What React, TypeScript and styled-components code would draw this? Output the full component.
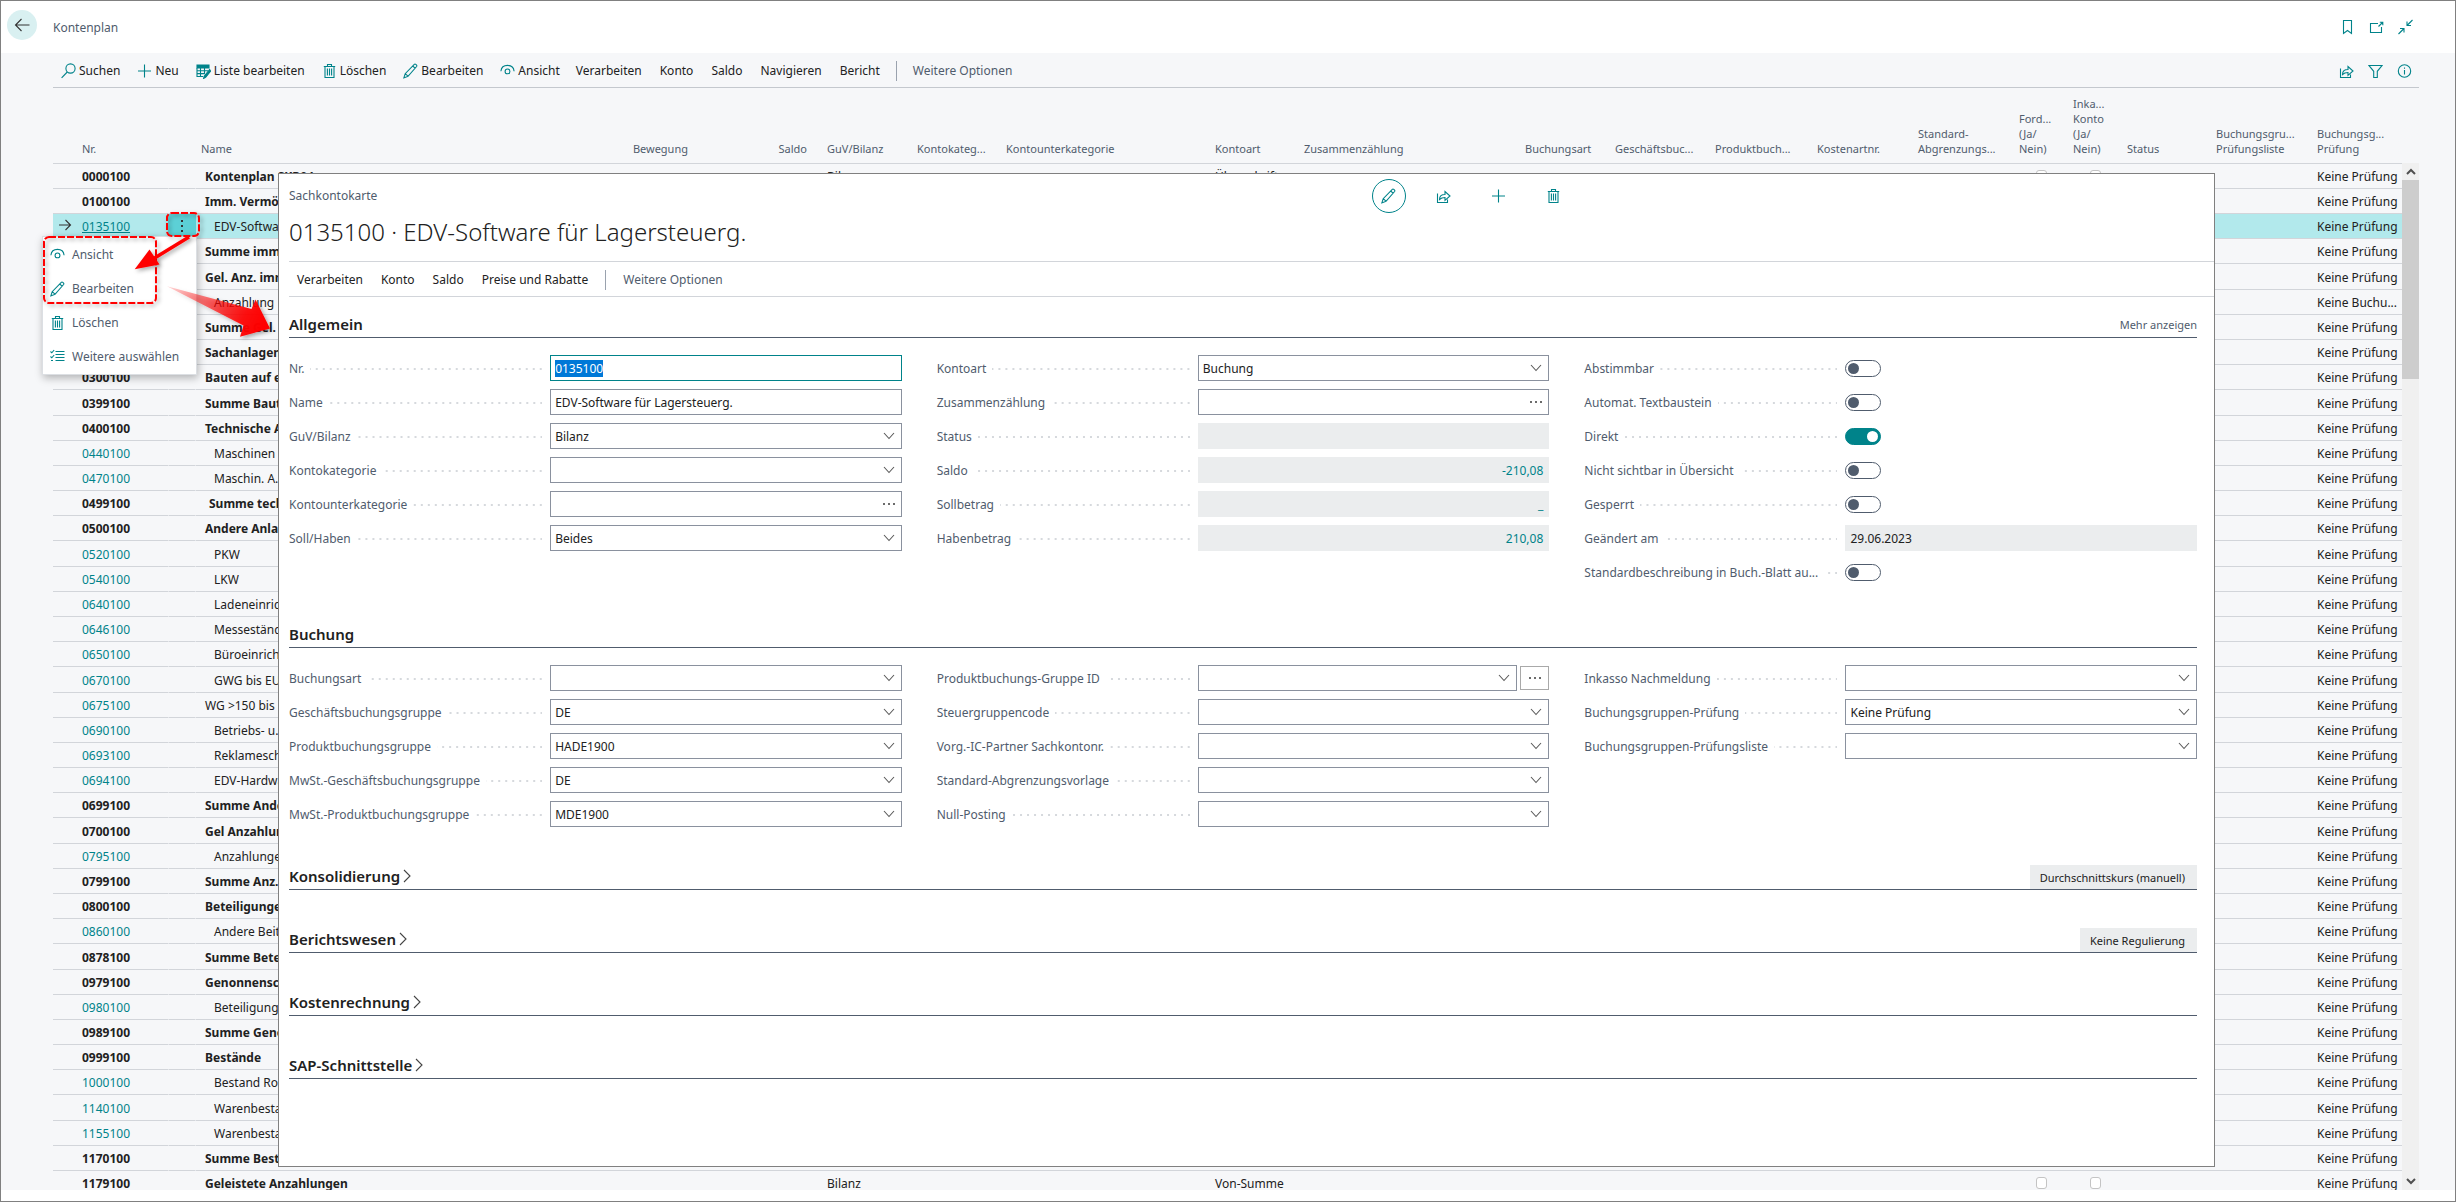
import React, { useEffect, useId, useRef } from 'react';
import styled, { createGlobalStyle, css } from 'styled-components';

/* ---------- theme values ---------- */

const teal = '#00838a';
const ink = '#212121';
const slate = '#505c6d';
const line = '#d2d5da';
const fieldGrey = '#ebedee';
const font = "'Noto Sans', 'Open Sans', sans-serif";

const GlobalStyle = createGlobalStyle`
  *, *::before, *::after { box-sizing: border-box; }
  body { margin: 0; background: #fff; }
  button, input, select { font: inherit; color: inherit; }
  ::selection { background: #0078d7; color: #fff; }
`;

/* ---------- page frame ---------- */

const Frame = styled.div`
  position: relative;
  display: flex;
  flex-direction: column;
  height: 100vh;
  padding-bottom: 11px;
  overflow: hidden;
  border: 1px solid #808080;
  background: #fff;
  color: ${ink};
  font: 12px/18px ${font};
`;

const TopBar = styled.header`
  display: flex;
  align-items: center;
  flex: none;
  height: 52px;
  padding: 0 42px 0 6px;
`;

const BackButton = styled.button`
  display: grid;
  place-items: center;
  width: 30px;
  height: 30px;
  margin: 0 16px 4px 0;
  padding: 0;
  border: 0;
  border-radius: 50%;
  background: #d9f0f1;
`;

const PageName = styled.h1`
  flex: 1;
  margin: 0;
  padding-top: 2px;
  color: ${slate};
  font-size: 12px;
  font-weight: 400;
`;

const IconButton = styled.button`
  display: grid;
  place-items: center;
  width: 15px;
  height: 20px;
  padding: 0;
  border: 0;
  background: none;
`;

const IconSet = styled.div`
  display: flex;
  gap: 14px;
`;

const Body = styled.main`
  display: flex;
  flex-direction: column;
  flex: 1;
  min-height: 0;
  padding: 0 36px 0 52px;
  background: #f6f7f9;
`;

const Toolbar = styled.nav`
  display: flex;
  align-items: center;
  gap: 16px;
  flex: none;
  height: 35px;
  padding: 1px 7px 0 8px;
  border-bottom: 1px solid #c4c8ce;
`;

const ActionGroup = styled.div<{ $gap: number }>`
  display: flex;
  align-items: center;
  gap: ${(p) => p.$gap}px;
`;

const Action = styled.button<{ $muted?: boolean }>`
  display: flex;
  align-items: center;
  gap: 3px;
  padding: 0;
  border: 0;
  background: none;
  color: ${(p) => (p.$muted ? slate : ink)};
  white-space: nowrap;

  svg { flex: none; }
`;

const Divider = styled.span`
  width: 1px;
  height: 20px;
  background: #9aa2ae;
`;

const Push = styled.div`
  flex: 1;
`;

/* ---------- list ---------- */

const ListArea = styled.div`
  display: flex;
  flex: 1;
  min-height: 0;
  overflow: hidden;
`;

const Table = styled.table`
  flex: 1;
  width: 100%;
  height: 0;
  min-width: 0;
  table-layout: fixed;
  border-collapse: separate;
  border-spacing: 0;
`;

const HeadCell = styled.th<{ $end?: boolean; $near?: boolean }>`
  height: 76px;
  padding: 0 ${(p) => (p.$near ? 5 : 10)}px 7px;
  border-bottom: 1px solid ${line};
  color: ${slate};
  font-size: 11px;
  line-height: 15px;
  font-weight: 400;
  text-align: ${(p) => (p.$end ? 'right' : 'left')};
  vertical-align: bottom;
  white-space: nowrap;
`;

const Row = styled.tr<{ $current?: boolean }>`
  height: 25px;
  background: ${(p) => (p.$current ? '#b2e9ec' : 'transparent')};

  /* zoomed row pitch is slightly above 25px: spread the spare pixels */
  &:nth-child(11n + 5),
  &:nth-child(11n + 10) { height: 26px; }
`;

const Cell = styled.td<{ $near?: boolean; $indent?: number; $bold?: boolean; $clip?: boolean }>`
  padding: 2px 0 0 ${(p) => (p.$near ? 5 : 10) + (p.$indent ?? 0)}px;
  overflow: ${(p) => (p.$clip ? 'hidden' : 'visible')};
  border-bottom: 1px solid ${line};
  font-weight: ${(p) => (p.$bold ? 700 : 400)};
  white-space: nowrap;
`;

const AccountLink = styled.a<{ $current?: boolean }>`
  color: ${teal};
  text-decoration: ${(p) => (p.$current ? 'underline' : 'none')};
`;

const RowMenuCell = styled.td<{ $current?: boolean }>`
  padding: 0;
  border-right: 1px solid #f6f7f9;
  border-bottom: 1px solid ${line};
  border-left: 1px solid #f6f7f9;
  ${(p) => p.$current && css`
    border-color: #5cd0d6;
    background: #5cd0d6;
  `}
`;

const MoreButton = styled.button`
  display: grid;
  place-items: center;
  width: 100%;
  height: 20px;
  padding: 0;
  border: 0;
  background: none;
`;

const CheckCell = styled.td`
  padding: 0 0 0 27px;
  border-bottom: 1px solid ${line};
  line-height: 0;
`;

const CheckBox = styled.input`
  appearance: none;
  width: 11px;
  height: 12px;
  margin: 0;
  border: 1px solid #c4c4c4;
  border-radius: 3px;
  background: #fff;
`;

const ScrollBar = styled.div`
  display: flex;
  flex-direction: column;
  flex: none;
  width: 17px;
  margin-top: 75px;
  background: #f0f0f0;
`;

const ScrollArrow = styled.span`
  display: grid;
  place-items: center;
  height: 17px;
`;

const Thumb = styled.span`
  height: 199px;
  background: #cdcdcd;
`;

/* ---------- row menu ---------- */

const Menu = styled.div`
  position: absolute;
  top: 235px;
  left: 41px;
  display: flex;
  flex-direction: column;
  min-width: 155px;
  padding: 1px 13px 0 7px;
  border: 1px solid #dcdfe3;
  background: #fff;
  box-shadow: 1px 3px 8px rgba(0, 0, 0, 0.28);
`;

const MenuItem = styled.button`
  display: flex;
  align-items: center;
  gap: 7px;
  height: 34px;
  padding: 0;
  border: 0;
  background: none;
  color: ${slate};
  white-space: nowrap;
`;

const Annotation = styled.svg`
  position: absolute;
  top: 199px;
  left: 29px;
  pointer-events: none;
`;

/* ---------- card ---------- */

const Card = styled.section`
  position: absolute;
  top: 172px;
  right: 240px;
  bottom: 34px;
  left: 277px;
  overflow: hidden;
  padding-left: 10px;
  border: 1px solid #808080;
  background: #fff;
`;

const CardTop = styled.div`
  padding: 5px 0 10px;
  border-bottom: 1px solid ${line};
`;

const CardBar = styled.div`
  display: grid;
  grid-template-columns: 9fr 7fr;
  align-items: center;
  height: 34px;
  color: ${slate};
`;

const CardIcons = styled.div`
  display: flex;
  align-items: center;
  gap: 21px;
`;

const RoundButton = styled.button<{ $ring?: boolean }>`
  display: grid;
  place-items: center;
  width: 34px;
  height: 34px;
  padding: 0;
  border: ${(p) => (p.$ring ? `1px solid ${teal}` : '0')};
  border-radius: 50%;
  background: none;
`;

const CardTitle = styled.h2`
  margin: 0;
  font-size: 24px;
  line-height: 38px;
  font-weight: 300;
`;

const CardActions = styled.nav`
  display: flex;
  align-items: center;
  gap: 17px;
  height: 35px;
  padding: 2px 0 0 8px;
  border-bottom: 1px solid ${line};
`;

const CardBody = styled.div`
  padding: 13px 17px 0 0;
`;

const SectionHead = styled.div`
  display: flex;
  align-items: center;
  height: 28px;
  border-bottom: 1px solid ${slate};

  & + & { margin-top: 35px; }
`;

const Fields = styled.div`
  display: grid;
  grid-template-columns: repeat(3, 1fr);
  gap: 35px;
  padding: 17px 0 0;

  & + div { margin-top: 35px; }
`;

const FieldColumn = styled.div`
  display: flex;
  flex-direction: column;
  gap: 8px;
`;

const SectionTitle = styled.h3`
  flex: 1;
  margin: 0;
  padding-top: 1px;
  font-size: 15px;
  line-height: 20px;
  font-weight: 600;
`;

const Expander = styled.button`
  display: flex;
  align-items: center;
  gap: 3px;
  padding: 0;
  border: 0;
  background: none;
`;

const ShowMore = styled.button`
  padding: 3px 0 0;
  border: 0;
  background: none;
  color: ${slate};
  font-size: 11px;
`;

const Summary = styled.span`
  align-self: stretch;
  margin-top: 3px;
  padding: 4px 12px 0 10px;
  background: ${fieldGrey};
  font-size: 11px;
`;

const FieldRow = styled.div`
  display: grid;
  grid-template-columns: 26fr 35fr;
  align-items: center;
  height: 26px;
`;

const LabelLine = styled.div`
  display: flex;
  align-items: center;
  gap: 6px;
  padding: 1px 8px 0 0;
  color: ${slate};
  white-space: nowrap;

  &::after {
    content: '';
    flex: 1;
    height: 2px;
    background: linear-gradient(to right, transparent 5px, #d6d9dd 5px) right / 7px 2px repeat-x;
  }
`;

const Box = styled.div<{ $focus?: boolean }>`
  position: relative;
  display: flex;
  flex: 1;
  align-items: center;
  height: 26px;
  border: 1px solid ${(p) => (p.$focus ? teal : '#8a919e')};
  background: #fff;

  input, select {
    appearance: none;
    flex: 1;
    width: 100%;
    min-width: 0;
    height: 24px;
    padding: 1px 24px 0 4px;
    border: 0;
    border-radius: 0;
    outline: 0;
    background: none;
  }
`;

const BoxGlyph = styled.span`
  position: absolute;
  right: 6px;
  display: flex;
  pointer-events: none;
`;

const ReadOnly = styled.output<{ $figure?: boolean }>`
  height: 26px;
  padding: 5px 6px 0 5px;
  background: ${fieldGrey};
  color: ${(p) => (p.$figure ? teal : ink)};
  text-align: ${(p) => (p.$figure ? 'right' : 'left')};
`;

const Assist = styled.div`
  display: flex;
  align-items: center;
  gap: 3px;
`;

const AssistButton = styled.button`
  display: grid;
  place-items: center;
  width: 29px;
  height: 24px;
  padding: 0;
  border: 1px solid #a9a9a9;
  background: #fff;
`;

const Switch = styled.input`
  appearance: none;
  display: flex;
  align-items: center;
  width: 36px;
  height: 17px;
  margin: 0;
  padding: 0 2px;
  border: 1px solid ${slate};
  border-radius: 9px;
  background: #fff;

  &::before {
    content: '';
    width: 11px;
    height: 11px;
    border-radius: 50%;
    background: ${slate};
  }

  &:checked {
    justify-content: flex-end;
    border-color: ${teal};
    background: ${teal};
  }
  &:checked::before { background: #fff; }
`;

/* ---------- icons ---------- */

type IconProps = { w: number; h: number; children: React.ReactNode; color?: string };

const Icon = ({ w, h, children, color = teal }: IconProps) => (
  <svg width={w} height={h} viewBox={`0 0 ${w} ${h}`} fill="none" stroke={color} strokeWidth="1.1" aria-hidden="true">
    {children}
  </svg>
);

const BackIcon = () => (
  <Icon w={16} h={14} color="#333"><path d="M15.500 7H1.500M7.500 1L1.500 7l6 6" /></Icon>
);
const SearchIcon = () => (
  <Icon w={15} h={16}><circle cx="9.500" cy="5.500" r="4.600" /><path d="M6.300 9L.6 14.900" /></Icon>
);
const PlusIcon = () => (
  <Icon w={15} h={16}><path d="M7.500 1.500v13M1 8h13" /></Icon>
);
const EditListIcon = () => (
  <Icon w={15} h={16}>
    <path d="M1 2h12v3H1z" fill={teal} />
    <path d="M1 5v8.500h6M1 7.800h11M1 10.600h8M4.500 5v8.500M8.500 5v6" />
    <path d="M13.600 6.500L8.200 13.200l-.6 2.200 2-1 5-6.200z" fill={teal} />
  </Icon>
);
const TrashIcon = () => (
  <Icon w={15} h={16}>
    <path d="M1.800 3.500h11.400M5.500 3.500v-2h4v2M3 3.500v11h9v-11M5.400 5.500v7M7.500 5.500v7M9.600 5.500v7" />
  </Icon>
);
const PencilIcon = () => (
  <Icon w={15} h={16}>
    <path d="M11.300 1.300c.9-.9 3.200 1 2.300 2.200L5 13.300.9 14.900l1.300-4.200zM9.700 3l2.400 2.200M2.200 10.700l2.800 2.500" />
  </Icon>
);
const EyeIcon = () => (
  <Icon w={15} h={16}>
    <path d="M.9 8.200C1.300 4.600 4 2.400 7.500 2.400s6.200 2.200 6.600 5.800" /><circle cx="7.500" cy="8.400" r="2.400" />
  </Icon>
);
const SelectMoreIcon = () => (
  <Icon w={15} h={16}>
    <path d="M5.500 2.500h9M5.500 5.500h9M5.500 8.500h9M5.500 11.500h9M.5 2.500l1.300 1.300L4.200 1M.5 7.500l1.300 1.300L4.200 6M1 11.500h2" />
  </Icon>
);
const BookmarkIcon = () => (
  <Icon w={15} h={16}><path d="M3.500 1.500h8v13l-4-3-4 3z" /></Icon>
);
const PopOutIcon = () => (
  <Icon w={15} h={16}><path d="M9 4.500H1.500v9h11V8M9.500 7.500l4-4M10.800 3.300h3v3" /></Icon>
);
const CollapseIcon = () => (
  <Icon w={15} h={16}><path d="M14.500 1L9 6.500M9 2.500v4h4M.5 15L6 9.500M2 9.500h4v4" /></Icon>
);
const ShareIcon = () => (
  <Icon w={15} h={16}>
    <path d="M1.500 5.500v9h10v-3M3.500 11.500c0-3.500 2-5 5.500-5v-3l5 4.500-5 4.300V9.500C6.500 9.500 5 10 3.500 11.500z" />
  </Icon>
);
const FilterIcon = () => (
  <Icon w={15} h={16}><path d="M1 2.500h13L9.300 8.300v6.200H5.700V8.300z" /></Icon>
);
const InfoIcon = () => (
  <Icon w={15} h={16}><circle cx="7.500" cy="8" r="6.200" /><path d="M7.500 7v4.500M7.500 4.500v1.200" /></Icon>
);
const ArrowIcon = () => (
  <Icon w={14} h={12} color="#333"><path d="M1 6h11.500M7.500 1l5 5-5 5" /></Icon>
);
const DotsVertical = () => (
  <Icon w={4} h={14} color="none"><path d="M1 1h2v2H1zM1 6h2v2H1zM1 11h2v2H1z" fill="#333" /></Icon>
);
const ChevronDown = () => (
  <Icon w={12} h={8} color="#5a5a5a"><path d="M1 1l5 5.500L11 1" /></Icon>
);
const Ellipsis = () => (
  <Icon w={12} h={8} color="none"><path d="M0 3h2v2H0zM5 3h2v2H5zM10 3h2v2h-2z" fill="#6b6b6b" /></Icon>
);
const ChevronRight = () => (
  <Icon w={8} h={14} color="#444"><path d="M1 1l6 6-6 6" /></Icon>
);
const ScrollChevron = ({ up }: { up?: boolean }) => (
  <svg width="10" height="7" viewBox="0 0 10 7" fill="none" stroke="#505050" strokeWidth="2" aria-hidden="true">
    <path d={up ? 'M1 6l4-4 4 4' : 'M1 1l4 4 4-4'} />
  </svg>
);

/* ---------- data ---------- */

type Account = { no: string; name: string; indent?: number; posting?: boolean; balance?: string; type?: string; check?: string };

const heading = (no: string, name: string, extra: Partial<Account> = {}): Account => ({ no, name, indent: 4, ...extra });
const posting = (no: string, name: string, extra: Partial<Account> = {}): Account => ({ no, name, indent: 13, posting: true, ...extra });

const accounts: Account[] = [
  heading('0000100', 'Kontenplan SKR04', { balance: 'Bilanz', type: 'Überschrift' }),
  heading('0100100', 'Imm. Vermögen'),
  posting('0135100', 'EDV-Software'),
  heading('', 'Summe imm.'),
  heading('', 'Gel. Anz. imm.'),
  posting('', 'Anzahlung', { check: 'Keine Buchu...' }),
  heading('', 'Summe Gel.'),
  heading('', 'Sachanlagen'),
  heading('0300100', 'Bauten auf e.'),
  heading('0399100', 'Summe Bauten'),
  heading('0400100', 'Technische A.'),
  posting('0440100', 'Maschinen'),
  posting('0470100', 'Maschin. A.'),
  heading('0499100', 'Summe techn.', { indent: 8 }),
  heading('0500100', 'Andere Anlagen'),
  posting('0520100', 'PKW'),
  posting('0540100', 'LKW'),
  posting('0640100', 'Ladeneinricht.'),
  posting('0646100', 'Messestände'),
  posting('0650100', 'Büroeinricht.'),
  posting('0670100', 'GWG bis EUR'),
  posting('0675100', 'WG >150 bis', { indent: 4 }),
  posting('0690100', 'Betriebs- u.'),
  posting('0693100', 'Reklameschild'),
  posting('0694100', 'EDV-Hardware'),
  heading('0699100', 'Summe Andere'),
  heading('0700100', 'Gel Anzahlung'),
  posting('0795100', 'Anzahlungen'),
  heading('0799100', 'Summe Anz.'),
  heading('0800100', 'Beteiligungen'),
  posting('0860100', 'Andere Beit.'),
  heading('0878100', 'Summe Beteil.'),
  heading('0979100', 'Genonnensch.'),
  posting('0980100', 'Beteiligung'),
  heading('0989100', 'Summe Genon.'),
  heading('0999100', 'Bestände'),
  posting('1000100', 'Bestand Roh'),
  posting('1140100', 'Warenbestand'),
  posting('1155100', 'Warenbestand'),
  heading('1170100', 'Summe Best.'),
  heading('1179100', 'Geleistete Anzahlungen', { balance: 'Bilanz', type: 'Von-Summe' }),
];

type Column = { key: string; title: string[]; width?: number; end?: boolean; near?: boolean };

const columns: Column[] = [
  { key: 'mark', title: [], width: 24 },
  { key: 'no', title: ['Nr.'], width: 91, near: true },
  { key: 'menu', title: [], width: 28 },
  { key: 'name', title: ['Name'], near: true },
  { key: 'net', title: ['Bewegung'], width: 119, end: true },
  { key: 'balance', title: ['Saldo'], width: 119, end: true },
  { key: 'guv', title: ['GuV/Bilanz'], width: 90 },
  { key: 'cat', title: ['Kontokateg...'], width: 89 },
  { key: 'subcat', title: ['Kontounterkategorie'], width: 209 },
  { key: 'type', title: ['Kontoart'], width: 89 },
  { key: 'total', title: ['Zusammenzählung'], width: 221 },
  { key: 'post', title: ['Buchungsart'], width: 90 },
  { key: 'bus', title: ['Geschäftsbuc...'], width: 100 },
  { key: 'prod', title: ['Produktbuch...'], width: 102 },
  { key: 'cost', title: ['Kostenartnr.'], width: 101 },
  { key: 'defer', title: ['Standard-', 'Abgrenzungs...'], width: 101 },
  { key: 'claim', title: ['Ford...', '(Ja/', 'Nein)'], width: 54 },
  { key: 'debt', title: ['Inka...', 'Konto', '(Ja/', 'Nein)'], width: 54 },
  { key: 'status', title: ['Status'], width: 89 },
  { key: 'checklist', title: ['Buchungsgru...', 'Prüfungsliste'], width: 101 },
  { key: 'check', title: ['Buchungsg...', 'Prüfung'], width: 95 },
];

/* ---------- fields ---------- */

const Labelled = ({ label, id, children }: { label: string; id: string; children: React.ReactNode }) => (
  <FieldRow>
    <LabelLine><label htmlFor={id}>{label}</label></LabelLine>
    {children}
  </FieldRow>
);

const TextField = ({ label, value = '', glyph, selected }: { label: string; value?: string; glyph?: React.ReactNode; selected?: boolean }) => {
  const id = useId();
  const ref = useRef<HTMLInputElement>(null);
  useEffect(() => {
    if (selected && ref.current) {
      ref.current.focus();
      ref.current.select();
    }
  }, [selected]);
  return (
    <Labelled label={label} id={id}>
      <Box $focus={selected}>
        <input id={id} ref={ref} type="text" defaultValue={value} />
        {glyph && <BoxGlyph>{glyph}</BoxGlyph>}
      </Box>
    </Labelled>
  );
};

const SelectBox = ({ id, value }: { id: string; value?: string }) => (
  <Box>
    <select id={id} defaultValue={value}><option>{value}</option></select>
    <BoxGlyph><ChevronDown /></BoxGlyph>
  </Box>
);

const SelectField = ({ label, value = '' }: { label: string; value?: string }) => {
  const id = useId();
  return <Labelled label={label} id={id}><SelectBox id={id} value={value} /></Labelled>;
};

const AssistField = ({ label }: { label: string }) => {
  const id = useId();
  return (
    <Labelled label={label} id={id}>
      <Assist>
        <SelectBox id={id} value="" />
        <AssistButton aria-label={`${label} auswählen`}><Ellipsis /></AssistButton>
      </Assist>
    </Labelled>
  );
};

const OutputField = ({ label, value = '', figure }: { label: string; value?: string; figure?: boolean }) => {
  const id = useId();
  return <Labelled label={label} id={id}><ReadOnly id={id} $figure={figure}>{value}</ReadOnly></Labelled>;
};

const SwitchField = ({ label, on }: { label: string; on?: boolean }) => {
  const id = useId();
  return <Labelled label={label} id={id}><Switch id={id} type="checkbox" role="switch" defaultChecked={on} /></Labelled>;
};

const Collapsed = ({ title, summary }: { title: string; summary?: string }) => (
  <SectionHead>
    <SectionTitle><Expander aria-expanded={false}>{title}<ChevronRight /></Expander></SectionTitle>
    {summary && <Summary>{summary}</Summary>}
  </SectionHead>
);

/* ---------- parts ---------- */

const AccountRow = ({ account, current }: { account: Account; current: boolean }) => (
  <Row $current={current}>
    <Cell $near>{current && <ArrowIcon />}</Cell>
    <Cell $near $bold={!account.posting}>
      {account.posting
        ? <AccountLink href="#" $current={current}>{account.no}</AccountLink>
        : account.no}
    </Cell>
    <RowMenuCell $current={current}>
      {current && <MoreButton aria-label="Weitere Optionen anzeigen"><DotsVertical /></MoreButton>}
    </RowMenuCell>
    <Cell $indent={account.indent} $near $bold={!account.posting} $clip>{account.name}</Cell>
    <Cell /><Cell />
    <Cell>{account.balance}</Cell>
    <Cell /><Cell />
    <Cell>{account.type}</Cell>
    <Cell /><Cell /><Cell /><Cell /><Cell /><Cell />
    <CheckCell><CheckBox type="checkbox" aria-label="Forderung" /></CheckCell>
    <CheckCell><CheckBox type="checkbox" aria-label="Inkasso" /></CheckCell>
    <Cell /><Cell />
    <Cell>{account.check ?? 'Keine Prüfung'}</Cell>
  </Row>
);

const AccountList = () => (
  <ListArea>
    <Table>
      <colgroup>
        {columns.map((c) => <col key={c.key} width={c.width} />)}
      </colgroup>
      <thead>
        <tr>
          {columns.map((c) => (
            <HeadCell key={c.key} $end={c.end} $near={c.near}>
              {c.title.map((t) => <div key={t}>{t}</div>)}
            </HeadCell>
          ))}
        </tr>
      </thead>
      <tbody>
        {accounts.map((a, i) => <AccountRow key={i} account={a} current={a.no === '0135100'} />)}
      </tbody>
    </Table>
    <ScrollBar>
      <ScrollArrow><ScrollChevron up /></ScrollArrow>
      <Thumb />
      <Push />
      <ScrollArrow><ScrollChevron /></ScrollArrow>
    </ScrollBar>
  </ListArea>
);

const RowMenu = () => (
  <Menu>
    <MenuItem><EyeIcon />Ansicht</MenuItem>
    <MenuItem><PencilIcon />Bearbeiten</MenuItem>
    <MenuItem><TrashIcon />Löschen</MenuItem>
    <MenuItem><SelectMoreIcon />Weitere auswählen</MenuItem>
  </Menu>
);

const Marks = () => (
  <Annotation width="260" height="190" viewBox="0 0 260 190" aria-hidden="true">
    <defs>
      <linearGradient id="fade" x1="137" y1="86" x2="232" y2="130" gradientUnits="userSpaceOnUse">
        <stop offset="0" stopColor="#f00" stopOpacity="0.15" />
        <stop offset="0.8" stopColor="#f00" stopOpacity="0.92" />
        <stop offset="1" stopColor="#f00" />
      </linearGradient>
      <filter id="drop" x="-20%" y="-20%" width="150%" height="150%">
        <feDropShadow dx="2" dy="2" stdDeviation="2" floodColor="#000" floodOpacity="0.35" />
      </filter>
    </defs>
    <g filter="url(#drop)" fill="none" stroke="#f00" strokeWidth="2" strokeDasharray="7 2">
      <rect x="14" y="37" width="112" height="66" rx="5" />
      <rect x="137" y="13" width="32" height="23" rx="5" />
    </g>
    <g filter="url(#drop)">
      <path d="M159 37L123 59" stroke="#f00" strokeWidth="3.500" fill="none" />
      <path d="M104.700 69.300L119.500 49.500L129.500 64.500z" fill="#f00" />
    </g>
    <path d="M137 86.300L221.500 109L225.500 99.500L240 128.500L210 136.700L213.500 125.500z" fill="url(#fade)" filter="url(#drop)" />
  </Annotation>
);

const AccountCard = () => (
  <Card aria-label="Sachkontokarte">
    <CardTop>
      <CardBar>
        <span>Sachkontokarte</span>
        <CardIcons>
          <RoundButton $ring aria-label="Bearbeiten"><PencilIcon /></RoundButton>
          <RoundButton aria-label="Teilen"><ShareIcon /></RoundButton>
          <RoundButton aria-label="Neu"><PlusIcon /></RoundButton>
          <RoundButton aria-label="Löschen"><TrashIcon /></RoundButton>
        </CardIcons>
      </CardBar>
      <CardTitle>0135100 · EDV-Software für Lagersteuerg.</CardTitle>
    </CardTop>
    <CardActions>
      <ActionGroup $gap={18}>
        <Action>Verarbeiten</Action>
        <Action>Konto</Action>
        <Action>Saldo</Action>
        <Action>Preise und Rabatte</Action>
      </ActionGroup>
      <Divider />
      <Action $muted>Weitere Optionen</Action>
    </CardActions>
    <CardBody>
      <SectionHead>
        <SectionTitle>Allgemein</SectionTitle>
        <ShowMore>Mehr anzeigen</ShowMore>
      </SectionHead>
      <Fields>
        <FieldColumn>
          <TextField label="Nr." value="0135100" selected />
          <TextField label="Name" value="EDV-Software für Lagersteuerg." />
          <SelectField label="GuV/Bilanz" value="Bilanz" />
          <SelectField label="Kontokategorie" />
          <TextField label="Kontounterkategorie" glyph={<Ellipsis />} />
          <SelectField label="Soll/Haben" value="Beides" />
        </FieldColumn>
        <FieldColumn>
          <SelectField label="Kontoart" value="Buchung" />
          <TextField label="Zusammenzählung" glyph={<Ellipsis />} />
          <OutputField label="Status" />
          <OutputField label="Saldo" value="-210,08" figure />
          <OutputField label="Sollbetrag" value="_" figure />
          <OutputField label="Habenbetrag" value="210,08" figure />
        </FieldColumn>
        <FieldColumn>
          <SwitchField label="Abstimmbar" />
          <SwitchField label="Automat. Textbaustein" />
          <SwitchField label="Direkt" on />
          <SwitchField label="Nicht sichtbar in Übersicht" />
          <SwitchField label="Gesperrt" />
          <OutputField label="Geändert am" value="29.06.2023" />
          <SwitchField label="Standardbeschreibung in Buch.-Blatt au..." />
        </FieldColumn>
      </Fields>
      <SectionHead>
        <SectionTitle>Buchung</SectionTitle>
      </SectionHead>
      <Fields>
        <FieldColumn>
          <SelectField label="Buchungsart" />
          <SelectField label="Geschäftsbuchungsgruppe" value="DE" />
          <SelectField label="Produktbuchungsgruppe" value="HADE1900" />
          <SelectField label="MwSt.-Geschäftsbuchungsgruppe" value="DE" />
          <SelectField label="MwSt.-Produktbuchungsgruppe" value="MDE1900" />
        </FieldColumn>
        <FieldColumn>
          <AssistField label="Produktbuchungs-Gruppe ID" />
          <SelectField label="Steuergruppencode" />
          <SelectField label="Vorg.-IC-Partner Sachkontonr." />
          <SelectField label="Standard-Abgrenzungsvorlage" />
          <SelectField label="Null-Posting" />
        </FieldColumn>
        <FieldColumn>
          <SelectField label="Inkasso Nachmeldung" />
          <SelectField label="Buchungsgruppen-Prüfung" value="Keine Prüfung" />
          <SelectField label="Buchungsgruppen-Prüfungsliste" />
        </FieldColumn>
      </Fields>
      <Collapsed title="Konsolidierung" summary="Durchschnittskurs (manuell)" />
      <Collapsed title="Berichtswesen" summary="Keine Regulierung" />
      <Collapsed title="Kostenrechnung" />
      <Collapsed title="SAP-Schnittstelle" />
    </CardBody>
  </Card>
);

export default function App() {
  return (
    <Frame>
      <GlobalStyle />
      <TopBar>
        <BackButton aria-label="Zurück"><BackIcon /></BackButton>
        <PageName>Kontenplan</PageName>
        <IconSet>
          <IconButton aria-label="Lesezeichen"><BookmarkIcon /></IconButton>
          <IconButton aria-label="In neuem Fenster öffnen"><PopOutIcon /></IconButton>
          <IconButton aria-label="Verkleinern"><CollapseIcon /></IconButton>
        </IconSet>
      </TopBar>
      <Body>
        <Toolbar>
          <ActionGroup $gap={17}>
            <Action><SearchIcon />Suchen</Action>
            <Action><PlusIcon />Neu</Action>
            <Action><EditListIcon />Liste bearbeiten</Action>
            <Action><TrashIcon />Löschen</Action>
            <Action><PencilIcon />Bearbeiten</Action>
            <Action><EyeIcon />Ansicht</Action>
          </ActionGroup>
          <ActionGroup $gap={18}>
            <Action>Verarbeiten</Action>
            <Action>Konto</Action>
            <Action>Saldo</Action>
            <Action>Navigieren</Action>
            <Action>Bericht</Action>
          </ActionGroup>
          <Divider />
          <Action $muted>Weitere Optionen</Action>
          <Push />
          <IconSet>
            <IconButton aria-label="Teilen"><ShareIcon /></IconButton>
            <IconButton aria-label="Filter"><FilterIcon /></IconButton>
            <IconButton aria-label="Info"><InfoIcon /></IconButton>
          </IconSet>
        </Toolbar>
        <AccountList />
      </Body>
      <AccountCard />
      <RowMenu />
      <Marks />
    </Frame>
  );
}
